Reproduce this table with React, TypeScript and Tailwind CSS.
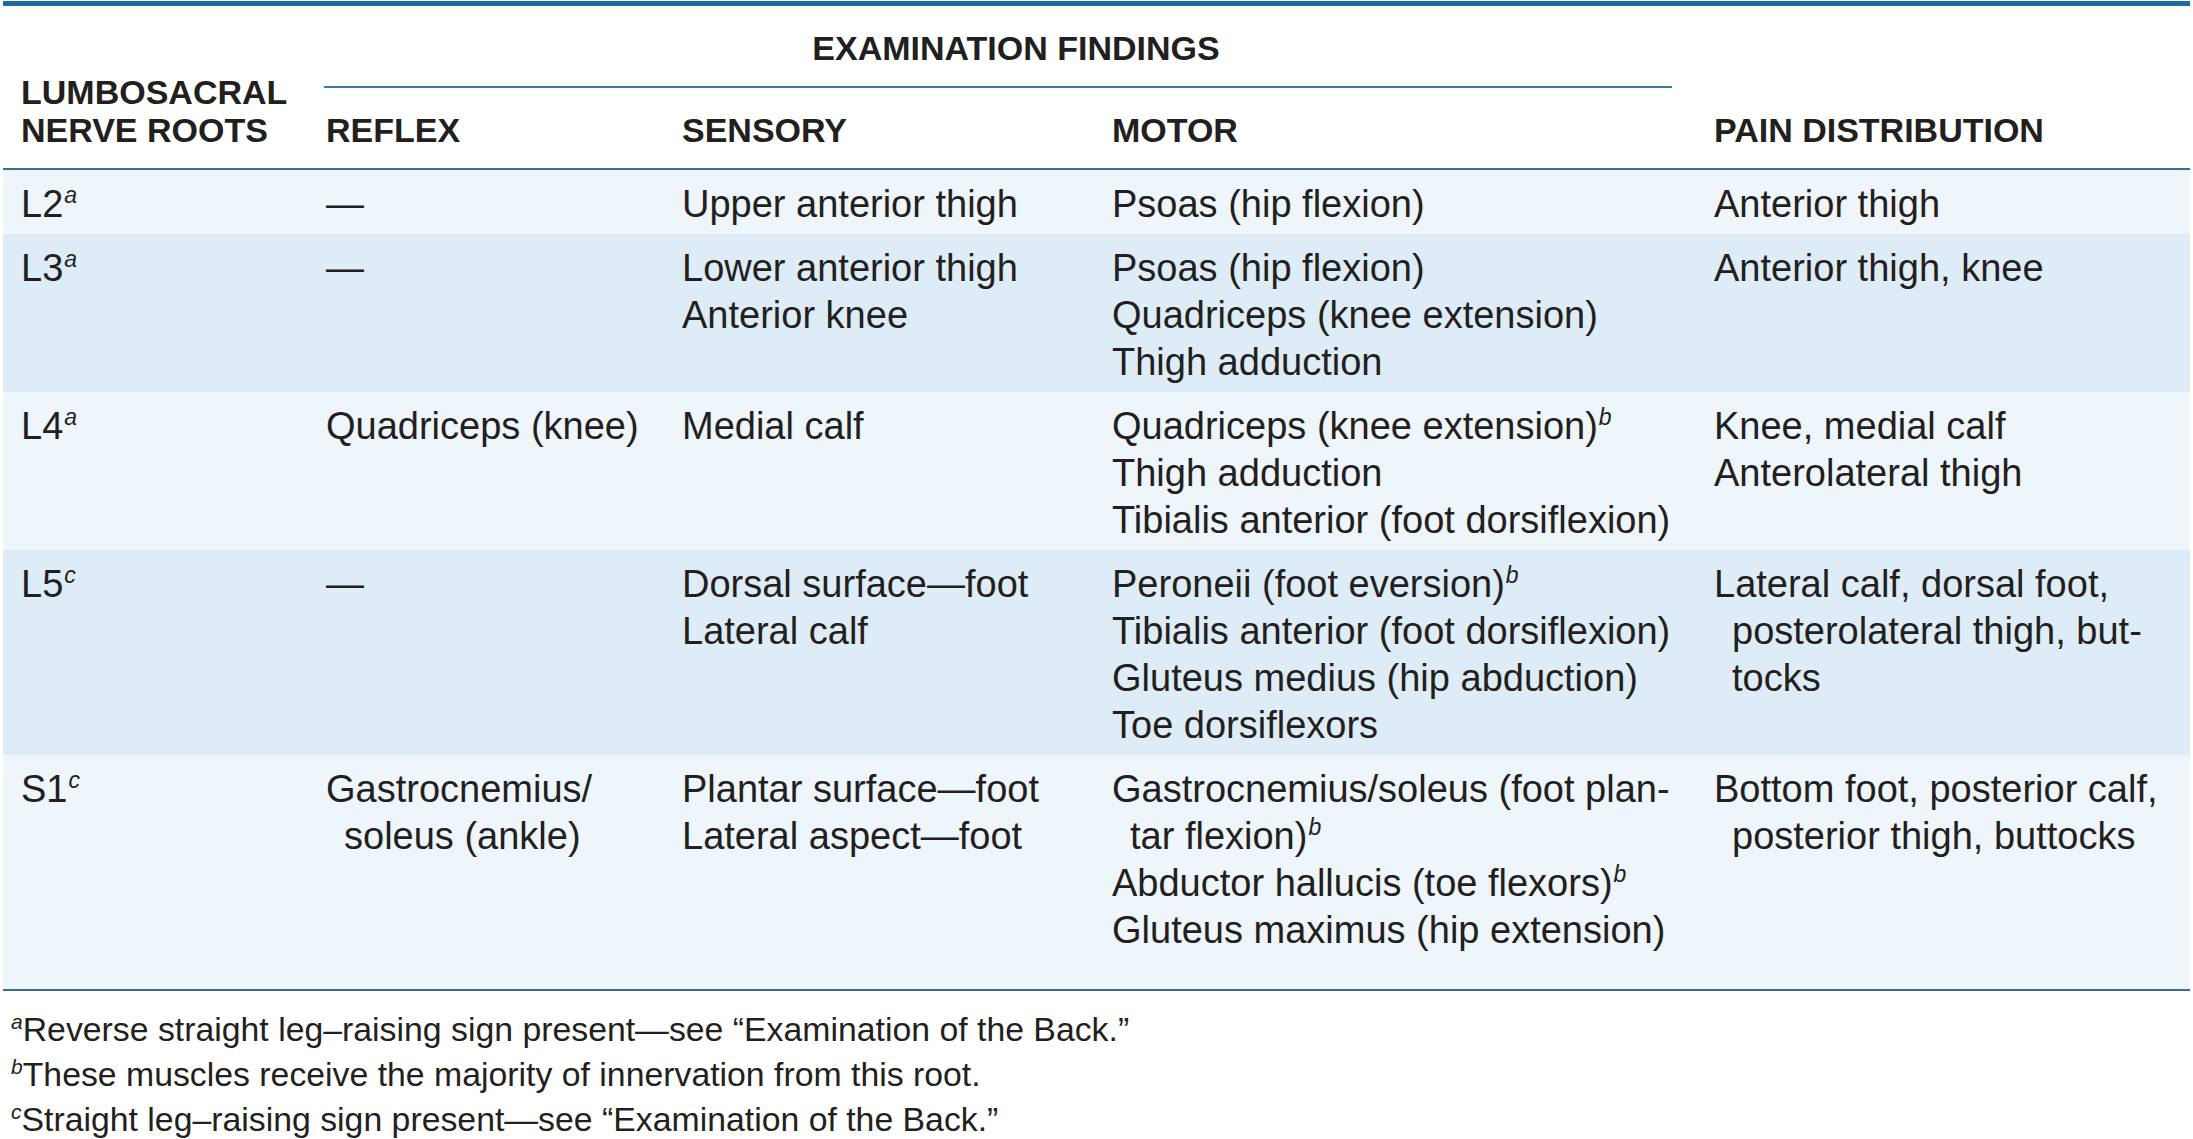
import React from "react";

type Line = { t: string; sup?: string; indent?: boolean };

const L = (t: string, sup?: string, indent?: boolean): Line => ({ t, sup, indent });

const rows = [
  {
    root: "L2",
    sup: "a",
    reflex: [L("—")],
    sensory: [L("Upper anterior thigh")],
    motor: [L("Psoas (hip flexion)")],
    pain: [L("Anterior thigh")],
    dark: false,
  },
  {
    root: "L3",
    sup: "a",
    reflex: [L("—")],
    sensory: [L("Lower anterior thigh"), L("Anterior knee")],
    motor: [L("Psoas (hip flexion)"), L("Quadriceps (knee extension)"), L("Thigh adduction")],
    pain: [L("Anterior thigh, knee")],
    dark: true,
  },
  {
    root: "L4",
    sup: "a",
    reflex: [L("Quadriceps (knee)")],
    sensory: [L("Medial calf")],
    motor: [
      L("Quadriceps (knee extension)", "b"),
      L("Thigh adduction"),
      L("Tibialis anterior (foot dorsiflexion)"),
    ],
    pain: [L("Knee, medial calf"), L("Anterolateral thigh")],
    dark: false,
  },
  {
    root: "L5",
    sup: "c",
    reflex: [L("—")],
    sensory: [L("Dorsal surface—foot"), L("Lateral calf")],
    motor: [
      L("Peroneii (foot eversion)", "b"),
      L("Tibialis anterior (foot dorsiflexion)"),
      L("Gluteus medius (hip abduction)"),
      L("Toe dorsiflexors"),
    ],
    pain: [
      L("Lateral calf, dorsal foot,"),
      L("posterolateral thigh, but-", undefined, true),
      L("tocks", undefined, true),
    ],
    dark: true,
  },
  {
    root: "S1",
    sup: "c",
    reflex: [L("Gastrocnemius/"), L("soleus (ankle)", undefined, true)],
    sensory: [L("Plantar surface—foot"), L("Lateral aspect—foot")],
    motor: [
      L("Gastrocnemius/soleus (foot plan-"),
      L("tar flexion)", "b", true),
      L("Abductor hallucis (toe flexors)", "b"),
      L("Gluteus maximus (hip extension)"),
    ],
    pain: [
      L("Bottom foot, posterior calf,"),
      L("posterior thigh, buttocks", undefined, true),
    ],
    dark: false,
    last: true,
  },
];

const Sup = ({ c }: { c: string }) => (
  <span className="relative -top-[14px] ml-[1px] text-[23px] leading-none italic">{c}</span>
);

const Cell = ({ lines, className = "" }: { lines: Line[]; className?: string }) => (
  <div className={className}>
    {lines.map((l, i) => (
      <div key={i} className={`h-[47px] whitespace-nowrap ${l.indent ? "pl-[18px]" : ""}`}>
        {l.t}
        {l.sup && <Sup c={l.sup} />}
      </div>
    ))}
  </div>
);

const cols = "grid grid-cols-[321px_358px_430px_602px_476px]";

const notes = [
  ["a", "Reverse straight leg–raising sign present—see “Examination of the Back.”"],
  ["b", "These muscles receive the majority of innervation from this root."],
  ["c", "Straight leg–raising sign present—see “Examination of the Back.”"],
];

export default function App() {
  return (
    <div
      className="min-h-screen bg-white text-[#231f20]"
      style={{ fontFamily: '"Liberation Sans", Arial, sans-serif' }}
    >
      <div className="ml-[3px] w-[2187px] pt-[1px]">
        <div className="h-[5px] bg-[#1d6c9f]" />

        {/* Header */}
        <div className={`${cols} border-b-2 border-[#3e6d8b] text-[34px] font-bold leading-[38px]`}>
          <div className="row-span-2 flex flex-col justify-end pb-[19px] pl-[18px]">
            <div>LUMBOSACRAL</div>
            <div>NERVE ROOTS</div>
          </div>
          <div className="col-span-3 mr-[42px] h-[82px] border-b-2 border-[#3d7aa3] pl-[36px] pt-[23px] text-center">
            EXAMINATION FINDINGS
          </div>
          <div />
          <div className="h-[80px] pl-[2px] pt-[23px]">REFLEX</div>
          <div className="pt-[23px]">SENSORY</div>
          <div className="pt-[23px]">MOTOR</div>
          <div className="pt-[23px]">PAIN DISTRIBUTION</div>
        </div>

        {/* Body */}
        <div className="border-b-2 border-[#3e6d8b] text-[38px] leading-[47px]">
          {rows.map((r) => (
            <div
              key={r.root}
              className={`${cols} pt-[11px] ${r.last ? "pb-[35px]" : "pb-[6px]"} ${
                r.dark ? "bg-[#deecf7]" : "bg-[#eef5fb]"
              }`}
            >
              <div className="h-[47px] pl-[18px]">
                {r.root}
                <Sup c={r.sup} />
              </div>
              <Cell lines={r.reflex} className="pl-[2px]" />
              <Cell lines={r.sensory} />
              <Cell lines={r.motor} />
              <Cell lines={r.pain} />
            </div>
          ))}
        </div>

        {/* Footnotes */}
        <div className="pl-[8px] pt-[16px] text-[33.8px] leading-[45px]">
          {notes.map(([s, t]) => (
            <div key={s} className="h-[45px] whitespace-nowrap">
              <span className="relative -top-[12px] text-[21px] leading-none italic">{s}</span>
              {t}
            </div>
          ))}
        </div>
      </div>
    </div>
  );
}
